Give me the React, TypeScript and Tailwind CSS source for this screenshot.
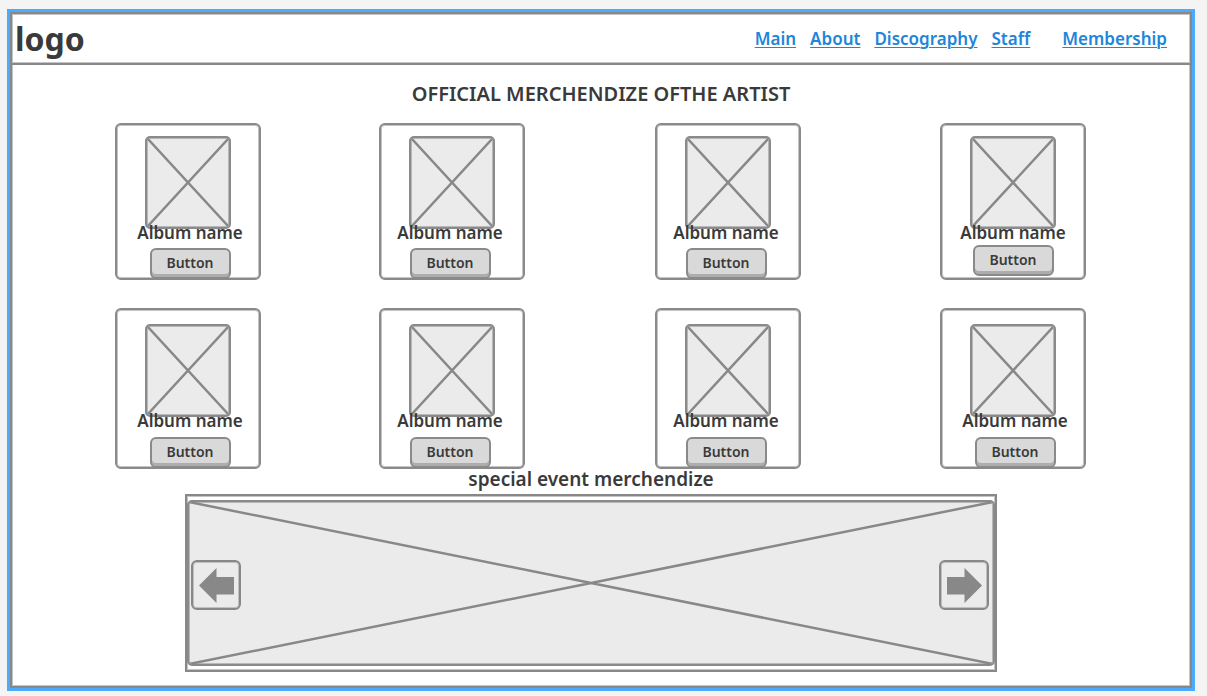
import React from "react";

type Lean = "left" | "right" | "none";

interface Album {
  name: string;
  lean: Lean;
  raised?: boolean;
}

const topRow: Album[] = [
  { name: "Album name", lean: "right" },
  { name: "Album name", lean: "left" },
  { name: "Album name", lean: "left" },
  { name: "Album name", lean: "none", raised: true },
];

const bottomRow: Album[] = [
  { name: "Album name", lean: "right" },
  { name: "Album name", lean: "left" },
  { name: "Album name", lean: "left" },
  { name: "Album name", lean: "right" },
];

const leanClass: Record<Lean, string> = {
  left: "pr-1",
  right: "pl-1",
  none: "",
};

function Placeholder({ className }: { className: string }) {
  return (
    <div
      className={`overflow-hidden rounded-[5px] border-2 border-[#8a8a8a] bg-[#ebebeb] shadow-[inset_0_0_0_1px_#b8b8b8] ${className}`}
    >
      <svg
        className="block h-full w-full"
        viewBox="0 0 100 100"
        preserveAspectRatio="none"
        aria-hidden="true"
      >
        <path
          d="M0 0L100 100M100 0L0 100"
          stroke="#888888"
          strokeWidth="2.5"
          vectorEffect="non-scaling-stroke"
          fill="none"
        />
      </svg>
    </div>
  );
}

function AlbumCard({ album, roomy }: { album: Album; roomy: boolean }) {
  return (
    <article
      className={`flex w-[146px] flex-col items-center rounded-md border-2 border-[#8a8a8a] shadow-[inset_0_0_0_1px_#c4c4c4] ${
        roomy ? "h-[161px] pt-[14px]" : "h-[157px] pt-[11px]"
      }`}
    >
      <Placeholder className="h-[93px] w-[86px] shrink-0" />
      <div
        className={`-mt-2 flex flex-1 flex-col items-center ${leanClass[album.lean]}`}
      >
        <h2 className="text-[17px] leading-6 font-semibold whitespace-nowrap">
          {album.name}
        </h2>
        <button
          type="button"
          className={`mt-auto h-[31px] w-[81px] rounded-md border-2 border-[#8a8a8a] bg-[#d9d9d9] pb-[2px] text-sm leading-5 font-semibold shadow-[inset_0_-3px_0_#adadad] ${
            album.raised ? "mb-[3px]" : "-mb-px"
          }`}
        >
          Button
        </button>
      </div>
    </article>
  );
}

function AlbumRow({ albums, roomy = false }: { albums: Album[]; roomy?: boolean }) {
  return (
    <div className="grid grid-cols-[264fr_276fr_285fr_146fr]">
      {albums.map((album, i) => (
        <AlbumCard key={i} album={album} roomy={roomy} />
      ))}
    </div>
  );
}

function ArrowButton({ direction }: { direction: "left" | "right" }) {
  return (
    <button
      type="button"
      aria-label={direction === "left" ? "Previous" : "Next"}
      className="flex size-[50px] items-center justify-center rounded-md border-2 border-[#888888] bg-[#ebebeb] shadow-[inset_0_0_0_1px_#c0c0c0]"
    >
      <svg
        className="h-[35px] w-[35px]"
        viewBox="0 0 35 35"
        fill="#888888"
        aria-hidden="true"
      >
        {direction === "left" ? (
          <path d="M0 17.5L17.5 0V9H35V26.5H17.5V35Z" />
        ) : (
          <path d="M35 17.5L17.5 0V9H0V26.5H17.5V35Z" />
        )}
      </svg>
    </button>
  );
}

const linkClass = "underline decoration-1 underline-offset-2";

export default function App() {
  return (
    <div className="flex min-h-screen bg-[#f4f4f4] pt-[9px] pr-3 pb-[5px] pl-[7px] font-['Noto_Sans',sans-serif] text-[#3a3a3a]">
      <div className="flex flex-1 border-[3px] border-[#4daafc]">
        <div className="flex-1 border-2 border-[#888888] bg-white shadow-[inset_0_0_0_1px_#c4c4c4]">
          <header className="flex h-[51px] items-center justify-between border-b-2 border-[#888888] pr-[23px] pl-[3px] shadow-[inset_0_-1px_0_#c4c4c4]">
            <div className="text-[32px] leading-10 font-bold">logo</div>
            <nav className="flex gap-[14px] text-[17px] leading-6 font-semibold text-[#2185d8]">
              <a href="#main" className={linkClass}>
                Main
              </a>
              <a href="#about" className={linkClass}>
                About
              </a>
              <a href="#discography" className={linkClass}>
                Discography
              </a>
              <a href="#staff" className={linkClass}>
                Staff
              </a>
              <a href="#membership" className={`ml-[18px] ${linkClass}`}>
                Membership
              </a>
            </nav>
          </header>

          <main>
            <h1 className="pt-[15px] pb-[15px] text-center text-xl leading-7 font-semibold">
              OFFICIAL MERCHENDIZE OFTHE ARTIST
            </h1>
            <section className="flex flex-col gap-7 pr-[104px] pl-[103px]">
              <AlbumRow albums={topRow} />
              <AlbumRow albums={bottomRow} roomy />
            </section>

            <section className="pr-[193px] pl-[173px]">
              <h2 className="pb-[5px] text-center text-[19px] leading-5 font-semibold">
                special event merchendize
              </h2>
              <div className="grid h-[178px] border-2 border-[#888888] py-1 shadow-[inset_0_0_0_1px_#c4c4c4]">
                <Placeholder className="col-start-1 row-start-1 min-h-0" />
                <div className="z-10 col-start-1 row-start-1 flex items-center justify-between pt-1 pr-[6px] pl-1">
                  <ArrowButton direction="left" />
                  <ArrowButton direction="right" />
                </div>
              </div>
            </section>
          </main>
        </div>
      </div>
    </div>
  );
}
